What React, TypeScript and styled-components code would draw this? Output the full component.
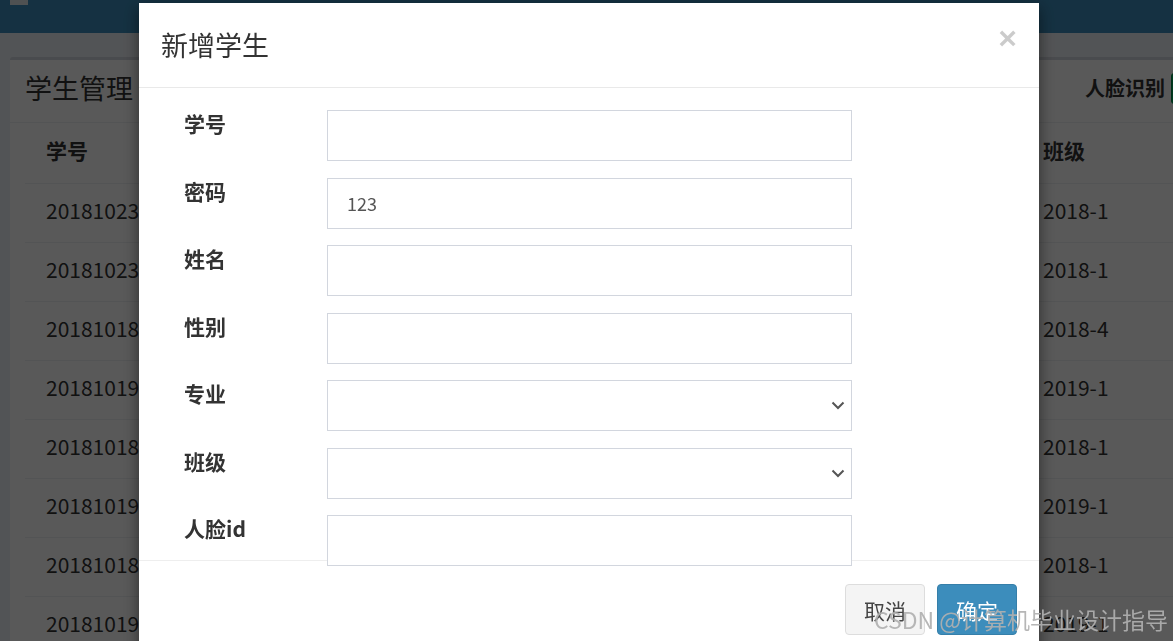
import React from "react";
import styled, { createGlobalStyle } from "styled-components";

const GlobalStyle = createGlobalStyle`
  html, body {
    margin: 0;
    padding: 0;
    overflow: hidden;
    height: 100%;
  }
  body {
    font-family: "Noto Sans CJK SC", "Noto Sans", sans-serif;
    font-size: 21px;
    line-height: 1.42857;
    color: #333;
    background: #ecf0f5;
  }
  * { box-sizing: border-box; }
`;

/* ---------- background page ---------- */

const Page = styled.div`
  width: 1173px;
  height: 641px;
  overflow: hidden;
  background: #ecf0f5;
`;

const TopBar = styled.header`
  height: 33px;
  background: #3c8dbc;
  padding-left: 10px;
`;

const Toggle = styled.span`
  display: block;
  width: 18px;
  height: 5px;
  background: #e3e7ec;
`;

const Content = styled.main`
  padding: 24px 0 0 10px;
`;

const Panel = styled.section`
  width: 1242px;
  background: #fff;
  border-top: 3px solid #d2d6de;
  border-radius: 3px;
`;

const PanelHead = styled.div`
  height: 63px;
  display: flex;
  align-items: center;
  justify-content: space-between;
  padding: 0 15px 6px 15px;
  border-bottom: 1px solid #eef0f2;
`;

const PanelTitle = styled.h3`
  margin: 0;
  font-size: 27px;
  font-weight: 400;
  line-height: 1.2;
  color: #333;
`;

const Tools = styled.div`
  display: flex;
  align-items: center;
  gap: 6px;
`;

const LinkButton = styled.span`
  font-size: 20px;
  font-weight: 700;
  color: #333;
`;

const GreenButton = styled.span`
  display: inline-flex;
  align-items: center;
  justify-content: center;
  width: 66px;
  height: 31px;
  background: #00a65a;
  border: 1px solid #008d4c;
  border-radius: 3px;
  color: #fff;
  font-size: 18px;
`;

const TableWrap = styled.div`
  padding: 0 15px;
`;

const Row = styled.div<{ $head?: boolean }>`
  display: grid;
  grid-template-columns: 240px 180px 140px 237px 200px 150px 200px;
  height: ${(p) => (p.$head ? 60 : 59)}px;
  padding-bottom: 6px;
  align-items: center;
  border-top: ${(p) => (p.$head ? "none" : "1px solid #eef0f2")};
  font-weight: ${(p) => (p.$head ? 700 : 400)};
  color: #333;
`;

const Cell = styled.div`
  padding-left: 21px;
  white-space: nowrap;
  overflow: hidden;
`;

/* ---------- modal ---------- */

const Backdrop = styled.div`
  position: fixed;
  inset: 0;
  background: rgba(0, 0, 0, 0.65);
  z-index: 10;
`;

const ModalLayer = styled.div`
  position: fixed;
  inset: 0;
  z-index: 20;
`;

const Dialog = styled.div`
  width: 900px;
  margin: 3px 0 0 139px;
  background: #fff;
  box-shadow: 0 5px 15px rgba(0, 0, 0, 0.5);
`;

const ModalHeader = styled.div`
  display: flex;
  justify-content: space-between;
  align-items: flex-start;
  padding: 22px;
  border-bottom: 1px solid #e9e9e9;
`;

const ModalTitle = styled.h4`
  margin: 0;
  font-size: 27px;
  font-weight: 400;
  line-height: 40px;
  color: #333;
`;

const Close = styled.button`
  border: 0;
  background: transparent;
  padding: 0;
  margin-top: -3px;
  font-family: "Liberation Sans", Arial, sans-serif;
  font-size: 32px;
  font-weight: 700;
  line-height: 1;
  color: #000;
  opacity: 0.2;
  cursor: pointer;
`;

const ModalBody = styled.div`
  height: 472px;
  padding: 22px 22px 0 22px;
  display: flex;
  flex-direction: column;
  gap: 16.5px;
`;

const FormRow = styled.div`
  display: grid;
  grid-template-columns: 166px 525px;
  align-items: start;
`;

const Label = styled.label`
  margin-top: -2px;
  padding-left: 23px;
  font-size: 21px;
  font-weight: 700;
  line-height: 30px;
  color: #333;
`;

const Field = styled.div`
  position: relative;
  z-index: 1;
`;

const Input = styled.input`
  display: block;
  width: 525px;
  height: 51px;
  padding: 0 19px;
  border: 1px solid #d2d6de;
  border-radius: 0;
  background: #fff;
  font-family: "Noto Sans CJK SC", "Noto Sans", sans-serif;
  font-size: 18px;
  color: #555;
  outline: none;
`;

const Select = styled.select`
  display: block;
  width: 525px;
  height: 51px;
  padding: 0 19px;
  border: 1px solid #d2d6de;
  border-radius: 0;
  background: #fff;
  font-family: "Noto Sans CJK SC", "Noto Sans", sans-serif;
  font-size: 18px;
  color: #555;
  appearance: none;
  -webkit-appearance: none;
  outline: none;
`;

const Chevron = styled.svg`
  position: absolute;
  right: 7px;
  top: 21px;
  pointer-events: none;
`;

const ModalFooter = styled.div`
  display: flex;
  justify-content: flex-end;
  gap: 12px;
  padding: 23px 22px;
  border-top: 1px solid #eeeeee;
`;

const Button = styled.button<{ $primary?: boolean }>`
  height: 51px;
  padding: 0 18px;
  border-radius: 4px;
  font-family: "Noto Sans CJK SC", "Noto Sans", sans-serif;
  font-size: 21px;
  line-height: 30px;
  border: 1px solid ${(p) => (p.$primary ? "#367fa9" : "#ddd")};
  background: ${(p) => (p.$primary ? "#3c8dbc" : "#f4f4f4")};
  color: ${(p) => (p.$primary ? "#fff" : "#444")};
`;

const Watermark = styled.div`
  position: fixed;
  right: 5px;
  bottom: 7px;
  z-index: 30;
  font-family: "Noto Sans CJK SC", "Noto Sans", sans-serif;
  font-size: 23px;
  line-height: 1.2;
  color: rgba(176, 176, 176, 0.92);
  pointer-events: none;
  white-space: nowrap;
`;

const rows = [
  ["2018102301", "张三", "男", "计算机科学与技术", "1001", "2018-1", "编辑 删除"],
  ["2018102302", "李四", "女", "计算机科学与技术", "1002", "2018-1", "编辑 删除"],
  ["2018101803", "王五", "男", "软件工程", "1003", "2018-4", "编辑 删除"],
  ["2018101904", "赵六", "女", "网络工程", "1004", "2019-1", "编辑 删除"],
  ["2018101805", "孙七", "男", "计算机科学与技术", "1005", "2018-1", "编辑 删除"],
  ["2018101906", "周八", "女", "网络工程", "1006", "2019-1", "编辑 删除"],
  ["2018101807", "吴九", "男", "计算机科学与技术", "1007", "2018-1", "编辑 删除"],
  ["2018101908", "郑十", "女", "网络工程", "1008", "2019-1", "编辑 删除"],
];

const ChevronIcon = () => (
  <Chevron width="14" height="9" viewBox="0 0 14 9">
    <path d="M1.5 1.5 L7 7 L12.5 1.5" fill="none" stroke="#555" strokeWidth="2" />
  </Chevron>
);

export default function App() {
  return (
    <>
      <GlobalStyle />
      <Page>
        <TopBar>
          <Toggle />
        </TopBar>
        <Content>
          <Panel>
            <PanelHead>
              <PanelTitle>学生管理</PanelTitle>
              <Tools>
                <LinkButton>人脸识别</LinkButton>
                <GreenButton>新增</GreenButton>
              </Tools>
            </PanelHead>
            <TableWrap>
              <Row $head>
                <Cell>学号</Cell>
                <Cell>姓名</Cell>
                <Cell>性别</Cell>
                <Cell>专业</Cell>
                <Cell>人脸id</Cell>
                <Cell>班级</Cell>
                <Cell>操作</Cell>
              </Row>
              {rows.map((r) => (
                <Row key={r[0]}>
                  {r.map((c, i) => (
                    <Cell key={i}>{c}</Cell>
                  ))}
                </Row>
              ))}
            </TableWrap>
          </Panel>
        </Content>
      </Page>

      <Backdrop />
      <ModalLayer>
        <Dialog>
          <ModalHeader>
            <ModalTitle>新增学生</ModalTitle>
            <Close aria-label="关闭">×</Close>
          </ModalHeader>
          <ModalBody>
            <FormRow>
              <Label>学号</Label>
              <Field>
                <Input />
              </Field>
            </FormRow>
            <FormRow>
              <Label>密码</Label>
              <Field>
                <Input defaultValue="123" />
              </Field>
            </FormRow>
            <FormRow>
              <Label>姓名</Label>
              <Field>
                <Input />
              </Field>
            </FormRow>
            <FormRow>
              <Label>性别</Label>
              <Field>
                <Input />
              </Field>
            </FormRow>
            <FormRow>
              <Label>专业</Label>
              <Field>
                <Select defaultValue="">
                  <option value=""></option>
                </Select>
                <ChevronIcon />
              </Field>
            </FormRow>
            <FormRow>
              <Label>班级</Label>
              <Field>
                <Select defaultValue="">
                  <option value=""></option>
                </Select>
                <ChevronIcon />
              </Field>
            </FormRow>
            <FormRow>
              <Label>人脸id</Label>
              <Field>
                <Input />
              </Field>
            </FormRow>
          </ModalBody>
          <ModalFooter>
            <Button>取消</Button>
            <Button $primary>确定</Button>
          </ModalFooter>
        </Dialog>
      </ModalLayer>
      <Watermark>CSDN @计算机毕业设计指导</Watermark>
    </>
  );
}
